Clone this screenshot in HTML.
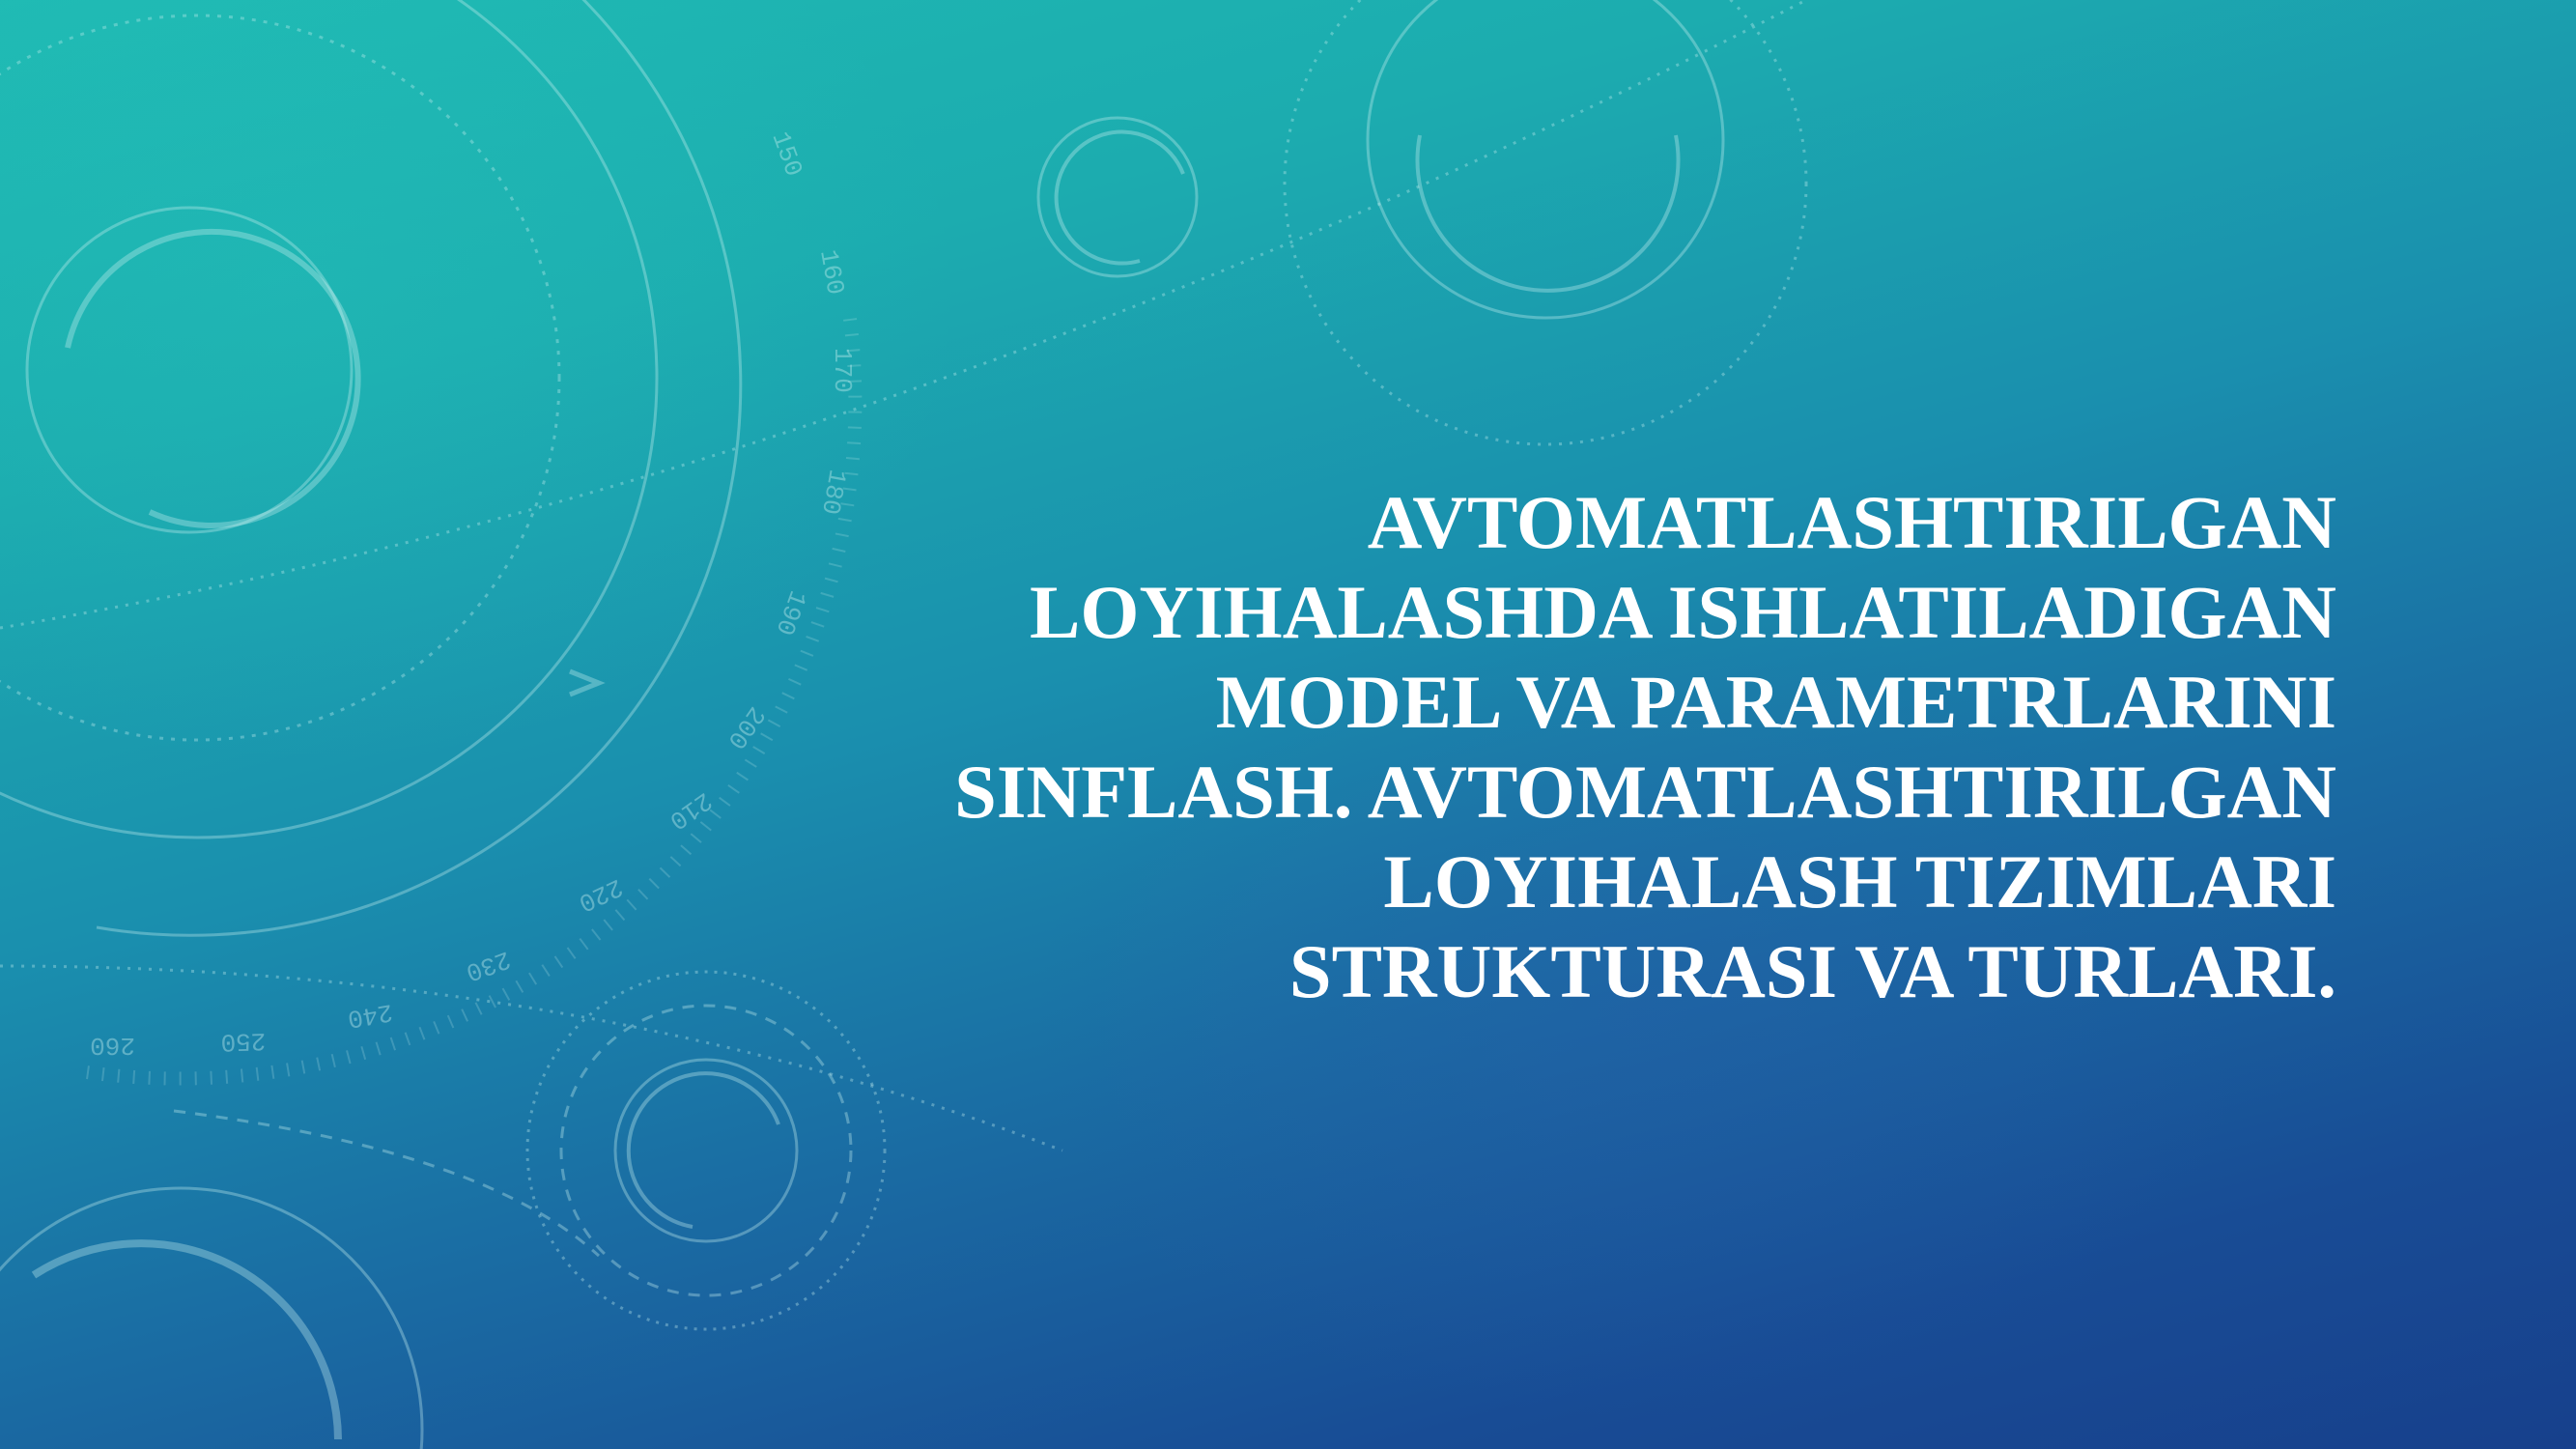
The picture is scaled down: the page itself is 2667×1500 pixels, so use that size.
<!DOCTYPE html>
<html><head><meta charset="utf-8"><style>
html,body{margin:0;padding:0;width:2667px;height:1500px;overflow:hidden}
body{position:relative;
background:linear-gradient(165deg,#1fbab3 0%,#1cacaf 22%,#1a8fae 45%,#1a6ca3 65%,#184c95 85%,#17408c 100%);}
.glow{position:absolute;inset:0;background:radial-gradient(ellipse 900px 600px at 1700px 1050px,rgba(40,90,170,0.35),transparent 70%),radial-gradient(ellipse 1000px 700px at 300px 300px,rgba(40,200,190,0.25),transparent 70%)}
svg{position:absolute;left:0;top:0;display:block}
.t{position:absolute;right:248px;top:494px;text-align:right;color:#fff;font-family:"Liberation Serif",serif;font-weight:bold;font-size:78.5px;line-height:93px;white-space:nowrap}
</style></head><body>
<div class="glow"></div>
<svg width="2667" height="1500" viewBox="0 0 2667 1500" fill="none" stroke="rgba(200,240,240,0.35)" stroke-width="3">
<circle cx="204" cy="391" r="476"/>
<path d="M100 960 A570 570 0 1 0 -80 -100" />
<circle cx="204" cy="391" r="375" stroke-dasharray="4 8"/>
<path d="M90 1110 A700 700 0 0 0 880 330" stroke-dasharray="2 14" stroke-width="14" opacity="0.6"/>
<circle cx="196" cy="383" r="168"/>
<path d="M70 360 A152 152 0 1 1 155 530" stroke-width="6"/>
<circle cx="1600" cy="145" r="184"/>
<path d="M1735 140 A135 135 0 1 1 1470 140" stroke-width="4"/>
<circle cx="1600" cy="190" r="270" stroke-dasharray="3 8"/>
<circle cx="1157" cy="204" r="82"/>
<path d="M1225 180 A68 68 0 1 0 1180 270" stroke-width="4"/>
<circle cx="731" cy="1191" r="94"/>
<path d="M806 1164 A80 80 0 1 0 717 1270" stroke-width="4"/>
<circle cx="731" cy="1191" r="150" stroke-dasharray="12 10"/>
<circle cx="731" cy="1191" r="185" stroke-dasharray="3 7"/>
<circle cx="187" cy="1480" r="250"/>
<path d="M35 1320 A204 204 0 0 1 350 1490" stroke-width="8"/>
<path d="M0 1000 Q600 1000 1100 1191" stroke-dasharray="3 8"/>
<path d="M180 1150 Q500 1190 620 1300" stroke-dasharray="12 10"/>
<path d="M0 650 Q900 500 1870 0" stroke-dasharray="3 8"/>
<path d="M590 695 l30 12 -30 12" stroke-width="5"/>
<g fill="rgba(200,240,240,0.4)" stroke="none" font-family="Liberation Mono,monospace" font-size="26">
<text x="800" y="140" transform="rotate(70 800 140)">150</text>
<text x="850" y="260" transform="rotate(80 850 260)">160</text>
<text x="865" y="360" transform="rotate(90 865 360)">170</text>
<text x="860" y="485" transform="rotate(100 860 485)">180</text>
<text x="820" y="610" transform="rotate(110 820 610)">190</text>
<text x="780" y="730" transform="rotate(125 780 730)">200</text>
<text x="730" y="820" transform="rotate(145 730 820)">210</text>
<text x="640" y="910" transform="rotate(155 640 910)">220</text>
<text x="525" y="985" transform="rotate(160 525 985)">230</text>
<text x="405" y="1040" transform="rotate(170 405 1040)">240</text>
<text x="275" y="1070" transform="rotate(178 275 1070)">250</text>
<text x="140" y="1075" transform="rotate(180 140 1075)">260</text>
</g>
</svg>
<div class="t">AVTOMATLASHTIRILGAN<br>LOYIHALASHDA ISHLATILADIGAN<br>MODEL VA PARAMETRLARINI<br>SINFLASH. AVTOMATLASHTIRILGAN<br>LOYIHALASH TIZIMLARI<br>STRUKTURASI VA TURLARI.</div>
</body></html>
